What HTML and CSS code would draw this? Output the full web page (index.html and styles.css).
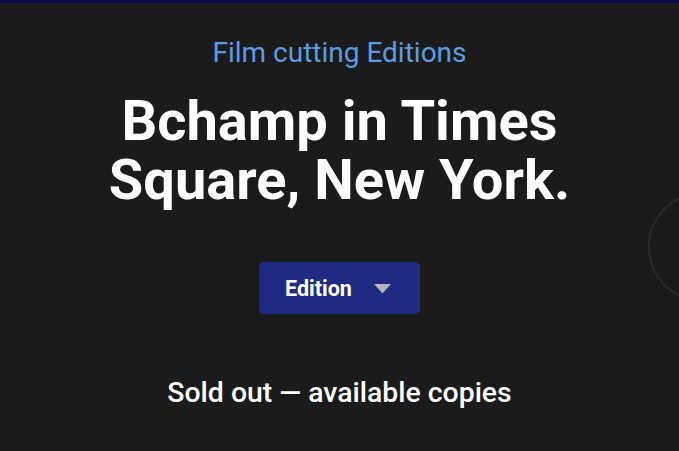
FILE: index.html
```html
<!DOCTYPE html>
<html lang="en">
<head>
    <meta charset="UTF-8">
    <meta name="viewport" content="width=device-width, initial-scale=1.0">
    <title>Bchamp in Times Square, New York.</title>
    <link rel="stylesheet" href="styles.css">
</head>
<body>

<div class="topbar"></div>

<div class="page">
    <!-- Edition header -->
    <div class="hero">
        <p class="kicker">Film cutting Editions</p>
        <h1 class="title">Bchamp in Times<br>Square, New York.</h1>
        <button class="edition-btn">
            <span>Edition</span>
            <svg class="caret" width="17" height="10" viewBox="0 0 17 10">
                <path d="M0 0 H17 L8.5 9.5 Z" fill="#b4b4c0"/>
            </svg>
        </button>
    </div>

    <!-- Availability -->
    <div class="panel">
        <h2 class="status">Sold out — available copies</h2>
    </div>

    <div class="ring"></div>
</div>

</body>
</html>
```

FILE: styles.css
```css
body {
    font-family: Roboto, "Noto Sans", Arial, sans-serif;
    background-color: #1b1b1b;
    color: #fff;
    margin: 0;
    height: 100vh;
    overflow: hidden;
}
.topbar {
    height: 3px;
    background-color: #0b0b52;
}
.page {
    position: relative;
    height: calc(100vh - 3px);
    overflow: hidden;
}
.hero {
    display: flex;
    flex-direction: column;
    align-items: center;
    text-align: center;
    padding-top: 32px;
}
.kicker {
    margin: 0;
    font-size: 28px;
    line-height: 36px;
    color: #5c9ce2;
}
.title {
    margin: 21px 0 0;
    font-size: 56px;
    line-height: 59px;
    font-weight: 700;
}
.edition-btn {
    display: flex;
    align-items: center;
    gap: 22px;
    margin-top: 52px;
    width: 161px;
    height: 52px;
    padding: 0 0 0 26px;
    background-color: #1f2a82;
    color: #fff;
    border: none;
    border-radius: 5px;
    font-family: inherit;
    font-size: 21.5px;
    font-weight: 700;
    cursor: pointer;
}
.caret {
    margin-top: 1px;
}
.panel {
    margin: 41px 23px 0;
    padding-top: 19px;
    border: 1px solid #1e1e1e;
    border-bottom: none;
    height: 200px;
    text-align: center;
}
.status {
    margin: 0;
    font-size: 28.4px;
    line-height: 36px;
    font-weight: 500;
}
.ring {
    position: absolute;
    top: 189px;
    left: 648px;
    width: 106px;
    height: 106px;
    border: 2px solid #2a2a2a;
    border-radius: 50%;
}
```
